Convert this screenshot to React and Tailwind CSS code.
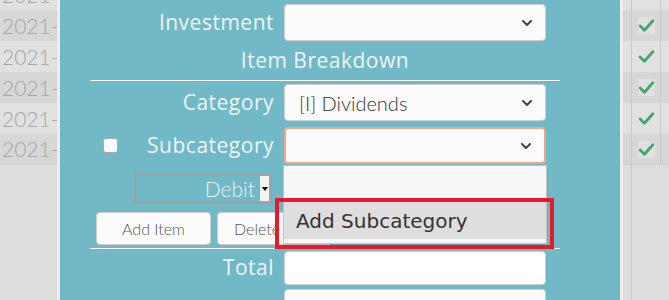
import React from "react";

const rows = [0, 1, 2, 3, 4, 5];

function Chevron() {
  return (
    <svg width="12" height="8" viewBox="0 0 12 8" className="text-[#444]">
      <path d="M2 2 L6 6 L10 2" fill="none" stroke="currentColor" strokeWidth="2" strokeLinecap="round" strokeLinejoin="round" />
    </svg>
  );
}

function Select({ value, focused }) {
  return (
    <div
      className={`flex h-[37px] w-[262px] items-center justify-between rounded-[4px] border bg-[#fbfbfb] pl-[14px] pr-[12px] ${
        focused ? "border-[#f2a48a] border-2" : "border-[#cfcfcf]"
      }`}
    >
      <span className="text-[20px] font-light text-[#333]">{value}</span>
      <Chevron />
    </div>
  );
}

function Label({ children }) {
  return (
    <span
      className="text-[21px] tracking-[0.5px] text-[#eef4f5]"
      style={{ fontFamily: "'Open Sans', Lato, sans-serif" }}
    >
      {children}
    </span>
  );
}

function Check() {
  return (
    <svg width="17" height="15" viewBox="0 0 16 14">
      <path d="M2 7.5 L6 11.5 L14 2.5" fill="none" stroke="#3ea66e" strokeWidth="2.6" strokeLinecap="round" strokeLinejoin="round" />
    </svg>
  );
}

export default function App() {
  return (
    <div className="flex h-[300px] w-[669px] overflow-hidden bg-[#dedede]" style={{ fontFamily: "Lato, 'Open Sans', sans-serif" }}>
      {/* left table */}
      <div className="w-[57px] shrink-0 overflow-hidden">
        <div className="-mt-[21px]">
          {rows.map((i) => (
            <div
              key={i}
              className={`flex h-[31px] items-center overflow-hidden whitespace-nowrap pl-[2px] text-[21px] font-light text-[#a6a6a6] ${
                i % 2 === 1 ? "bg-[#d7d7d7]" : "bg-[#e1e1e1]"
              } ${i === 5 ? "border-b border-[#cfcfcf]" : ""}`}
            >
              2021-
            </div>
          ))}
        </div>
      </div>
      <div className="w-[3px] shrink-0 bg-[#eeeeee]" />

      {/* modal */}
      <div className="relative w-[560px] shrink-0 bg-[#72b9c7]">
        <div className="ml-[30px] flex w-[470px] flex-col pt-[4px]">
          <div className="flex items-center gap-[12px]">
            <div className="-mr-[2px] flex w-[184px] justify-end">
              <Label>Investment</Label>
            </div>
            <Select value="" />
          </div>
          <div className="flex h-[39px] items-center justify-center pt-[1px]">
            <Label>Item Breakdown</Label>
          </div>
          <div className="h-px bg-white" />
          <div className="mt-[3px] flex items-center gap-[12px]">
            <div className="-mr-[2px] flex w-[184px] justify-end">
              <Label>Category</Label>
            </div>
            <Select value="[I] Dividends" />
          </div>
          <div className="mt-[6px] flex items-center gap-[12px]">
            <div className="-mr-[2px] flex w-[184px] items-center justify-between">
              <div className="ml-[13px] h-[15px] w-[15px] rounded-[3px] border border-[#aaa] bg-white" />
              <Label>Subcategory</Label>
            </div>
            <Select value="" focused />
          </div>
          <div className="mt-[9px] flex items-center gap-[12px]">
            <div className="flex w-[182px] justify-end">
              <div className="flex h-[31px] w-[138px] items-center justify-end border-2 border-[#9aa3a5] pr-[1px]">
                <span className="mr-[5px] text-[21px] font-light text-[#e9f1f3]">Debit</span>
                <div className="flex h-[25px] w-[9px] items-center justify-center bg-[#f3f3f3]">
                  <div className="h-0 w-0 border-x-[3px] border-t-[4px] border-x-transparent border-t-black" />
                </div>
              </div>
            </div>
          </div>
          <div className="mt-[8px] flex gap-[6px] pl-[6px]">
            <button className="h-[33px] w-[115px] rounded-[4px] border border-[#cfcfcf] bg-[#fcfcfc] text-[16px] font-light text-[#555]">
              Add Item
            </button>
            <button className="h-[33px] w-[115px] rounded-[4px] border border-[#cfcfcf] bg-[#fcfcfc] text-[16px] font-light text-[#555]">
              Delete Item
            </button>
          </div>
          <div className="mt-[3px] h-px bg-white" />
          <div className="mt-[2px] flex items-center gap-[12px]">
            <div className="-mr-[2px] flex w-[184px] justify-end">
              <Label>Total</Label>
            </div>
            <div className="h-[34px] w-[262px] rounded-[4px] border border-[#cfcfcf] bg-white" />
          </div>
          <div className="mt-[4px] flex items-center gap-[12px]">
            <div className="w-[182px]" />
            <div className="h-[34px] w-[262px] rounded-[4px] border border-[#cfcfcf] bg-[#fbfbfb]" />
          </div>
        </div>

        {/* open dropdown */}
        <div className="absolute left-[223px] top-[165px] w-[264px] border border-[#c4c4c4] bg-[#f8f8f8] shadow-sm">
          <div className="h-[36px]" />
          <div
            className="flex h-[37px] items-center bg-[#dedede] pl-[12px] text-[20px] text-[#333]"
            style={{ fontFamily: "'DejaVu Sans', 'Open Sans', sans-serif" }}
          >
            Add Subcategory
          </div>
          <div className="h-[4px]" />
        </div>
        <div className="absolute left-[215px] top-[198px] h-[51px] w-[279px] border-[4px] border-[#e8192c]" />
      </div>

      <div className="w-[3px] shrink-0 bg-[#eeeeee]" />
      {/* right table */}
      <div className="w-[46px] shrink-0 overflow-hidden">
        <div className="-mt-[21px]">
          {rows.map((i) => (
            <div
              key={i}
              className={`flex h-[31px] ${i % 2 === 1 ? "bg-[#d7d7d7]" : "bg-[#e1e1e1]"} ${
                i === 5 ? "border-b border-[#c8cfcf]" : ""
              }`}
            >
              <div className="w-[9px] border-r border-[#c3cccc]" />
              <div className="flex w-[29px] items-center justify-center border-r border-[#c3cccc]">
                {i > 0 && (
                  <div className={`flex h-[17px] w-[17px] items-center justify-center ${i % 2 === 1 ? "bg-[#e0e0e0]" : ""}`}>
                    <Check />
                  </div>
                )}
              </div>
            </div>
          ))}
        </div>
        <div className="flex h-full">
          <div className="w-[9px] border-r border-[#c3cccc]" />
          <div className="w-[29px]" />
        </div>
      </div>
    </div>
  );
}
